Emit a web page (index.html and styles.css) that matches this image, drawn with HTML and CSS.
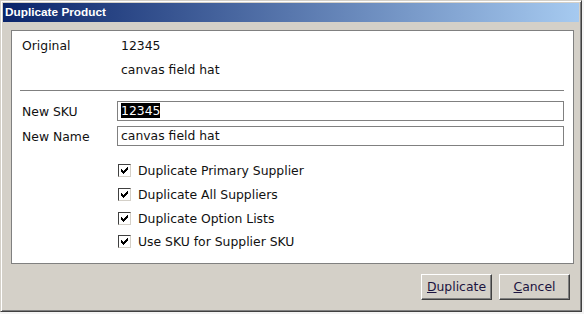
FILE: index.html
```html
<!DOCTYPE html>
<html>
<head>
  <title>Duplicate Product</title>
  <meta charset="UTF-8">
  <link rel="stylesheet" href="styles.css">
</head>
<body>
<div class="window">
  <div class="titleBar">Duplicate Product</div>
  <div class="panel">
    <div class="row">
      <span class="label">Original</span><span class="value">12345</span>
    </div>
    <div class="row">
      <span class="label"></span><span class="value">canvas field hat</span>
    </div>
    <div class="separator"></div>
    <div class="fieldRow">
      <span class="label">New SKU</span>
      <div class="inputText"><span class="selected">12345</span></div>
    </div>
    <div class="fieldRow">
      <span class="label">New Name</span>
      <div class="inputText">canvas field hat</div>
    </div>
    <div class="options">
      <div class="option"><span class="checkBox"><svg width="7" height="7" viewBox="0 0 7 7"><path d="M0 2h1v1h1v1h1V3h1V2h1V1h1V0h1v3H6v1H5v1H4v1H3v1H2V6H1V5H0z" fill="#000"/></svg></span>Duplicate Primary Supplier</div>
      <div class="option"><span class="checkBox"><svg width="7" height="7" viewBox="0 0 7 7"><path d="M0 2h1v1h1v1h1V3h1V2h1V1h1V0h1v3H6v1H5v1H4v1H3v1H2V6H1V5H0z" fill="#000"/></svg></span>Duplicate All Suppliers</div>
      <div class="option"><span class="checkBox"><svg width="7" height="7" viewBox="0 0 7 7"><path d="M0 2h1v1h1v1h1V3h1V2h1V1h1V0h1v3H6v1H5v1H4v1H3v1H2V6H1V5H0z" fill="#000"/></svg></span>Duplicate Option Lists</div>
      <div class="option"><span class="checkBox"><svg width="7" height="7" viewBox="0 0 7 7"><path d="M0 2h1v1h1v1h1V3h1V2h1V1h1V0h1v3H6v1H5v1H4v1H3v1H2V6H1V5H0z" fill="#000"/></svg></span>Use SKU for Supplier SKU</div>
    </div>
  </div>
  <div class="buttons">
    <div class="button"><u>D</u>uplicate</div>
    <div class="button"><u>C</u>ancel</div>
  </div>
</div>
</body>
</html>
```

FILE: styles.css
```css
body {
  margin: 0;
  background-color: #f4f4f4;
  font-family: "DejaVu Sans", Verdana, sans-serif;
  font-size: 12.4px;
  color: #111;
}

.window {
  box-sizing: border-box;
  width: 582px;
  height: 312px;
  background-color: #d4d0c8;
  border: 1px solid;
  border-color: #d4d0c8 #404040 #404040 #d4d0c8;
  box-shadow: inset 1px 1px 0 #fff, inset -1px -1px 0 #808080;
  padding: 2px;
}

.titleBar {
  height: 19px;
  line-height: 19px;
  padding-left: 2px;
  background: linear-gradient(to right, #0a246a, #a6caf0);
  color: white;
  font-family: "Liberation Sans", Tahoma, sans-serif;
  font-weight: bold;
  font-size: 11.8px;
}

.panel {
  box-sizing: border-box;
  height: 234px;
  margin: 8px 5px 0 8px;
  padding: 3px 9px 0 10px;
  background-color: white;
  border: 1px solid #808080;
}

.row {
  height: 24px;
  line-height: 24px;
  display: flex;
}

.label {
  width: 99px;
  flex: none;
}

.separator {
  height: 1px;
  background-color: #808080;
  margin: 8px 0 10px -2px;
}

.fieldRow {
  display: flex;
  align-items: center;
  margin-bottom: 5px;
}

.fieldRow .label {
  width: 95px;
}

.inputText {
  flex: 1;
  box-sizing: border-box;
  height: 20px;
  line-height: 18px;
  padding: 0 3px;
  border: 1px solid #808080;
}

.selected {
  background-color: black;
  color: white;
}

.options {
  padding: 8px 0 0 96px;
}

.option {
  display: flex;
  align-items: center;
  height: 23.7px;
}

.checkBox {
  box-sizing: border-box;
  width: 13px;
  height: 13px;
  margin-right: 7px;
  display: flex;
  align-items: center;
  justify-content: center;
  background-color: white;
  border: 1px solid;
  border-color: #404040 #d4d0c8 #d4d0c8 #404040;
}

.buttons {
  display: flex;
  justify-content: flex-end;
  gap: 7px;
  margin: 10px 9px 0 0;
}

.button {
  box-sizing: border-box;
  width: 71px;
  height: 26px;
  line-height: 23px;
  text-align: center;
  color: #1c1440;
  border: 1px solid;
  border-color: #fff #404040 #404040 #fff;
  box-shadow: inset -1px -1px 0 #808080;
}
```
